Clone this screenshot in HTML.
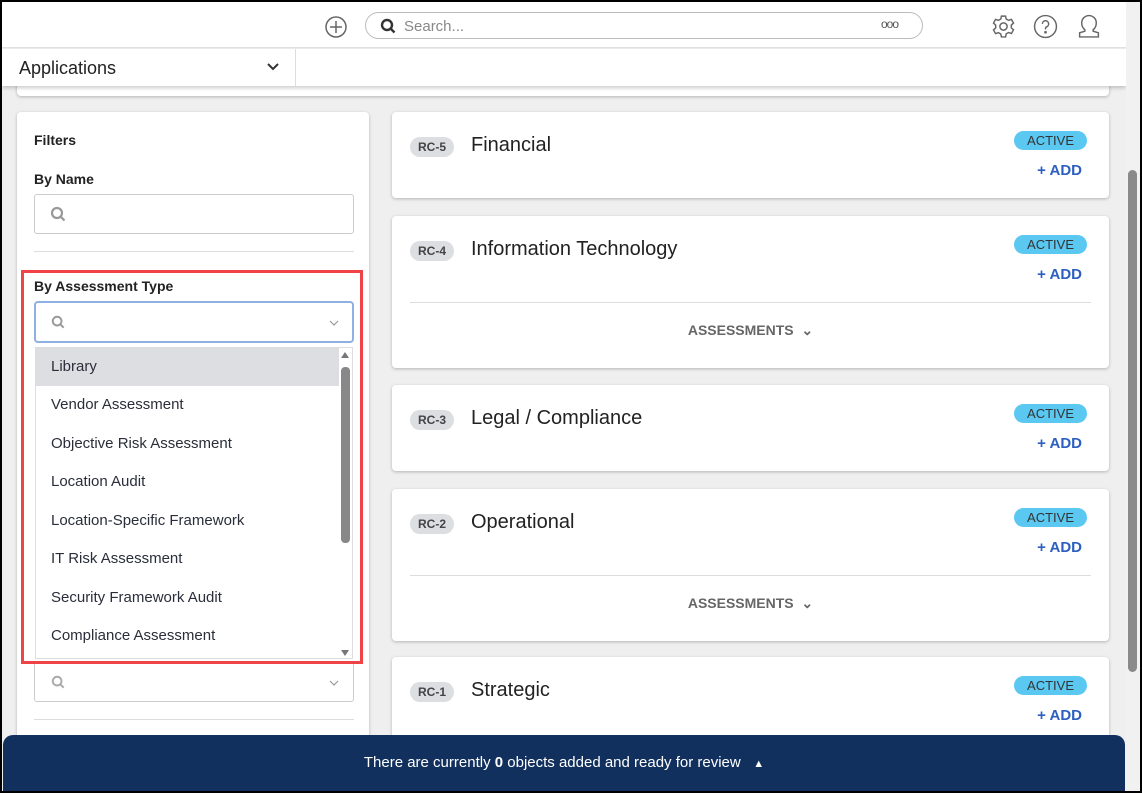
<!DOCTYPE html>
<html><head><meta charset="utf-8"><style>
*{box-sizing:border-box;margin:0;padding:0}
body{width:1142px;height:793px;overflow:hidden;background:#000;font-family:"Liberation Sans",sans-serif;position:relative}
.frame{position:absolute;left:2px;top:2px;width:1138px;height:789px;background:#efefef;overflow:hidden}
.abs{position:absolute}
.hdr{left:0;top:0;width:1124px;height:46px;background:#fff;border-bottom:1px solid #e2e2e2}
.bar2{left:0;top:47px;width:1124px;height:37px;background:#fff;box-shadow:0 2px 4px rgba(0,0,0,.2)}
.card{position:absolute;background:#fff;border-radius:4px;box-shadow:0 1px 3px rgba(0,0,0,.25)}
.rc{position:absolute;left:18px;top:25px;background:#dcdee1;color:#444;font-size:12px;font-weight:bold;border-radius:10px;padding:3px 8px;height:20px}
.title{position:absolute;left:79px;top:22px;font-size:20px;color:#222}
.active{position:absolute;right:22px;top:19px;background:#5bc8f2;color:#333;font-size:13px;border-radius:10px;padding:2px 13px;height:19px}
.add{position:absolute;right:27px;top:50px;color:#2c5fbf;font-size:15px;font-weight:bold}
.sep{position:absolute;left:18px;right:18px;top:86px;border-top:1px solid #ddd}
.asm{position:absolute;left:0;right:0;top:106px;text-align:center;color:#666;font-size:14px;font-weight:bold}
.item{position:absolute;left:0;width:303px;height:38px;padding-left:15px;line-height:38px;font-size:15px;color:#2a2e3a}
.lbl{position:absolute;font-size:14px;font-weight:bold;color:#222}
</style></head><body><div class="frame">
<div class="abs hdr">
<svg class="abs" style="left:322px;top:13px" width="24" height="24" viewBox="0 0 24 24" fill="none" stroke="#666" stroke-width="1.5"><circle cx="12" cy="12" r="10"/><path d="M12 6v12M6 12h12"/></svg>
<div class="abs" style="left:363px;top:10px;width:558px;height:27px;border:1px solid #bbb;border-radius:14px"></div>
<svg class="abs" style="left:378px;top:16px" width="16" height="16" viewBox="0 0 16 16" fill="none" stroke="#333" stroke-width="2.4"><circle cx="7" cy="7" r="5"/><path d="M10.5 10.5l4 4"/></svg>
<div class="abs" style="left:402px;top:16px;font-size:15px;color:#888">Search...</div>
<div class="abs" style="left:879px;top:15px;font-size:12px;color:#555;letter-spacing:-1px">ooo</div>
<svg class="abs" style="left:989px;top:12px" width="25" height="25" viewBox="0 0 24 24" fill="none" stroke="#666" stroke-width="1.4"><circle cx="12" cy="12" r="3.5"/><path d="M10 2h4l.6 2.8 2.3 1.3 2.7-.9 2 3.5-2.1 1.9v2.7l2.1 1.9-2 3.5-2.7-.9-2.3 1.3L14 22h-4l-.6-2.8-2.3-1.3-2.7.9-2-3.5 2.1-1.9v-2.7L2.4 8.7l2-3.5 2.7.9 2.3-1.3z"/></svg>
<svg class="abs" style="left:1031px;top:12px" width="25" height="25" viewBox="0 0 24 24" fill="none" stroke="#666" stroke-width="1.4"><circle cx="12" cy="12" r="10.5"/><path d="M9 9.5a3 3 0 1 1 4 2.8c-.8.4-1 1-1 1.8v.7"/><circle cx="12" cy="17.5" r=".6" fill="#666"/></svg>
<svg class="abs" style="left:1074px;top:12px" width="26" height="25" viewBox="0 0 24 24" fill="none" stroke="#666" stroke-width="1.4"><path d="M8 15c-2-1.5-3-3.5-3-6.5a7 7 0 0 1 14 0c0 3-1 5-3 6.5v1.5l5 1.5v4H3v-4l5-1.5z"/></svg>
</div>
<div class="card" style="left:15px;top:70px;width:1092px;height:24px"></div>
<div class="abs bar2" style="z-index:2"><div class="abs" style="left:17px;top:9px;font-size:18px;color:#222">Applications</div><svg class="abs" style="left:265px;top:14px" width="12" height="8" viewBox="0 0 12 8" fill="none" stroke="#333" stroke-width="2"><path d="M1 1l5 5 5-5"/></svg><div class="abs" style="left:293px;top:0;height:37px;border-left:1px solid #ddd"></div></div>

<div class="card" style="left:15px;top:110px;width:352px;height:700px">
<div class="lbl" style="left:17px;top:20px">Filters</div>
<div class="lbl" style="left:17px;top:59px">By Name</div>
<div class="abs" style="left:17px;top:82px;width:320px;height:40px;border:1px solid #ccc;border-radius:3px"></div>
<svg class="abs" style="left:33px;top:94px" width="16" height="16" viewBox="0 0 16 16" fill="none" stroke="#999" stroke-width="2.2"><circle cx="7" cy="7" r="5"/><path d="M10.5 10.5l4 4"/></svg>
<div class="abs" style="left:17px;top:139px;width:320px;border-top:1px solid #ddd"></div>
<div class="lbl" style="left:17px;top:166px">By Assessment Type</div>
<div class="abs" style="left:17px;top:189px;width:320px;height:42px;border:2px solid #8fb0e3;border-radius:4px"></div>
<svg class="abs" style="left:34px;top:203px" width="14" height="14" viewBox="0 0 16 16" fill="none" stroke="#999" stroke-width="2.2"><circle cx="7" cy="7" r="5"/><path d="M10.5 10.5l4 4"/></svg>
<svg class="abs" style="left:312px;top:208px" width="10" height="6" viewBox="0 0 10 6" fill="none" stroke="#999" stroke-width="1.2"><path d="M1 1l4 4 4-4"/></svg>
<div class="abs" style="left:18px;top:235px;width:318px;height:312px;background:#fff;border:1px solid #ddd;overflow:hidden">
<div class="item" style="top:0;background:#dcdee1">Library</div>
<div class="item" style="top:38px">Vendor Assessment</div>
<div class="item" style="top:77px">Objective Risk Assessment</div>
<div class="item" style="top:115px">Location Audit</div>
<div class="item" style="top:154px">Location-Specific Framework</div>
<div class="item" style="top:192px">IT Risk Assessment</div>
<div class="item" style="top:231px">Security Framework Audit</div>
<div class="item" style="top:269px">Compliance Assessment</div>
<div class="abs" style="left:305px;top:4px;width:0;height:0;border:4px solid transparent;border-bottom:6px solid #777;border-top:0"></div>
<div class="abs" style="left:305px;top:19px;width:9px;height:176px;background:#888;border-radius:4px"></div>
<div class="abs" style="left:305px;top:302px;width:0;height:0;border:4px solid transparent;border-top:6px solid #777;border-bottom:0"></div>
</div>
<div class="abs" style="left:17px;top:550px;width:320px;height:40px;border:1px solid #ccc;border-radius:3px"></div>
<svg class="abs" style="left:34px;top:563px" width="14" height="14" viewBox="0 0 16 16" fill="none" stroke="#aaa" stroke-width="2.2"><circle cx="7" cy="7" r="5"/><path d="M10.5 10.5l4 4"/></svg>
<svg class="abs" style="left:312px;top:568px" width="10" height="6" viewBox="0 0 10 6" fill="none" stroke="#999" stroke-width="1.2"><path d="M1 1l4 4 4-4"/></svg>
<div class="abs" style="left:17px;top:607px;width:320px;border-top:1px solid #ddd"></div>
</div>
<div class="abs" style="left:19px;top:268px;width:342px;height:394px;border:3px solid #f04348;z-index:3"></div>

<div class="card" style="left:390px;top:110px;width:717px;height:86px"><div class="rc">RC-5</div><div class="title">Financial</div><div class="active">ACTIVE</div><div class="add">+ ADD</div></div>
<div class="card" style="left:390px;top:214px;width:717px;height:152px"><div class="rc">RC-4</div><div class="title">Information Technology</div><div class="active">ACTIVE</div><div class="add">+ ADD</div><div class="sep"></div><div class="asm">ASSESSMENTS &nbsp;⌄</div></div>
<div class="card" style="left:390px;top:383px;width:717px;height:86px"><div class="rc">RC-3</div><div class="title">Legal / Compliance</div><div class="active">ACTIVE</div><div class="add">+ ADD</div></div>
<div class="card" style="left:390px;top:487px;width:717px;height:152px"><div class="rc">RC-2</div><div class="title">Operational</div><div class="active">ACTIVE</div><div class="add">+ ADD</div><div class="sep"></div><div class="asm">ASSESSMENTS &nbsp;⌄</div></div>
<div class="card" style="left:390px;top:655px;width:717px;height:152px"><div class="rc">RC-1</div><div class="title">Strategic</div><div class="active">ACTIVE</div><div class="add">+ ADD</div></div>

<div class="abs" style="left:1124px;top:0;width:14px;height:789px;background:#f1f1f1;z-index:4">
<div class="abs" style="left:2px;top:168px;width:9px;height:502px;background:#8a8a8a;border-radius:5px"></div>
</div>
<div class="abs" style="left:1px;top:733px;width:1122px;height:58px;background:#12305e;border-radius:10px 10px 0 0;z-index:5;color:#fff;font-size:15px;text-align:center;line-height:56px">There are currently <b>0</b> objects added and ready for review &nbsp;&nbsp;<span style="font-size:11px">▲</span></div>
</div></body></html>
